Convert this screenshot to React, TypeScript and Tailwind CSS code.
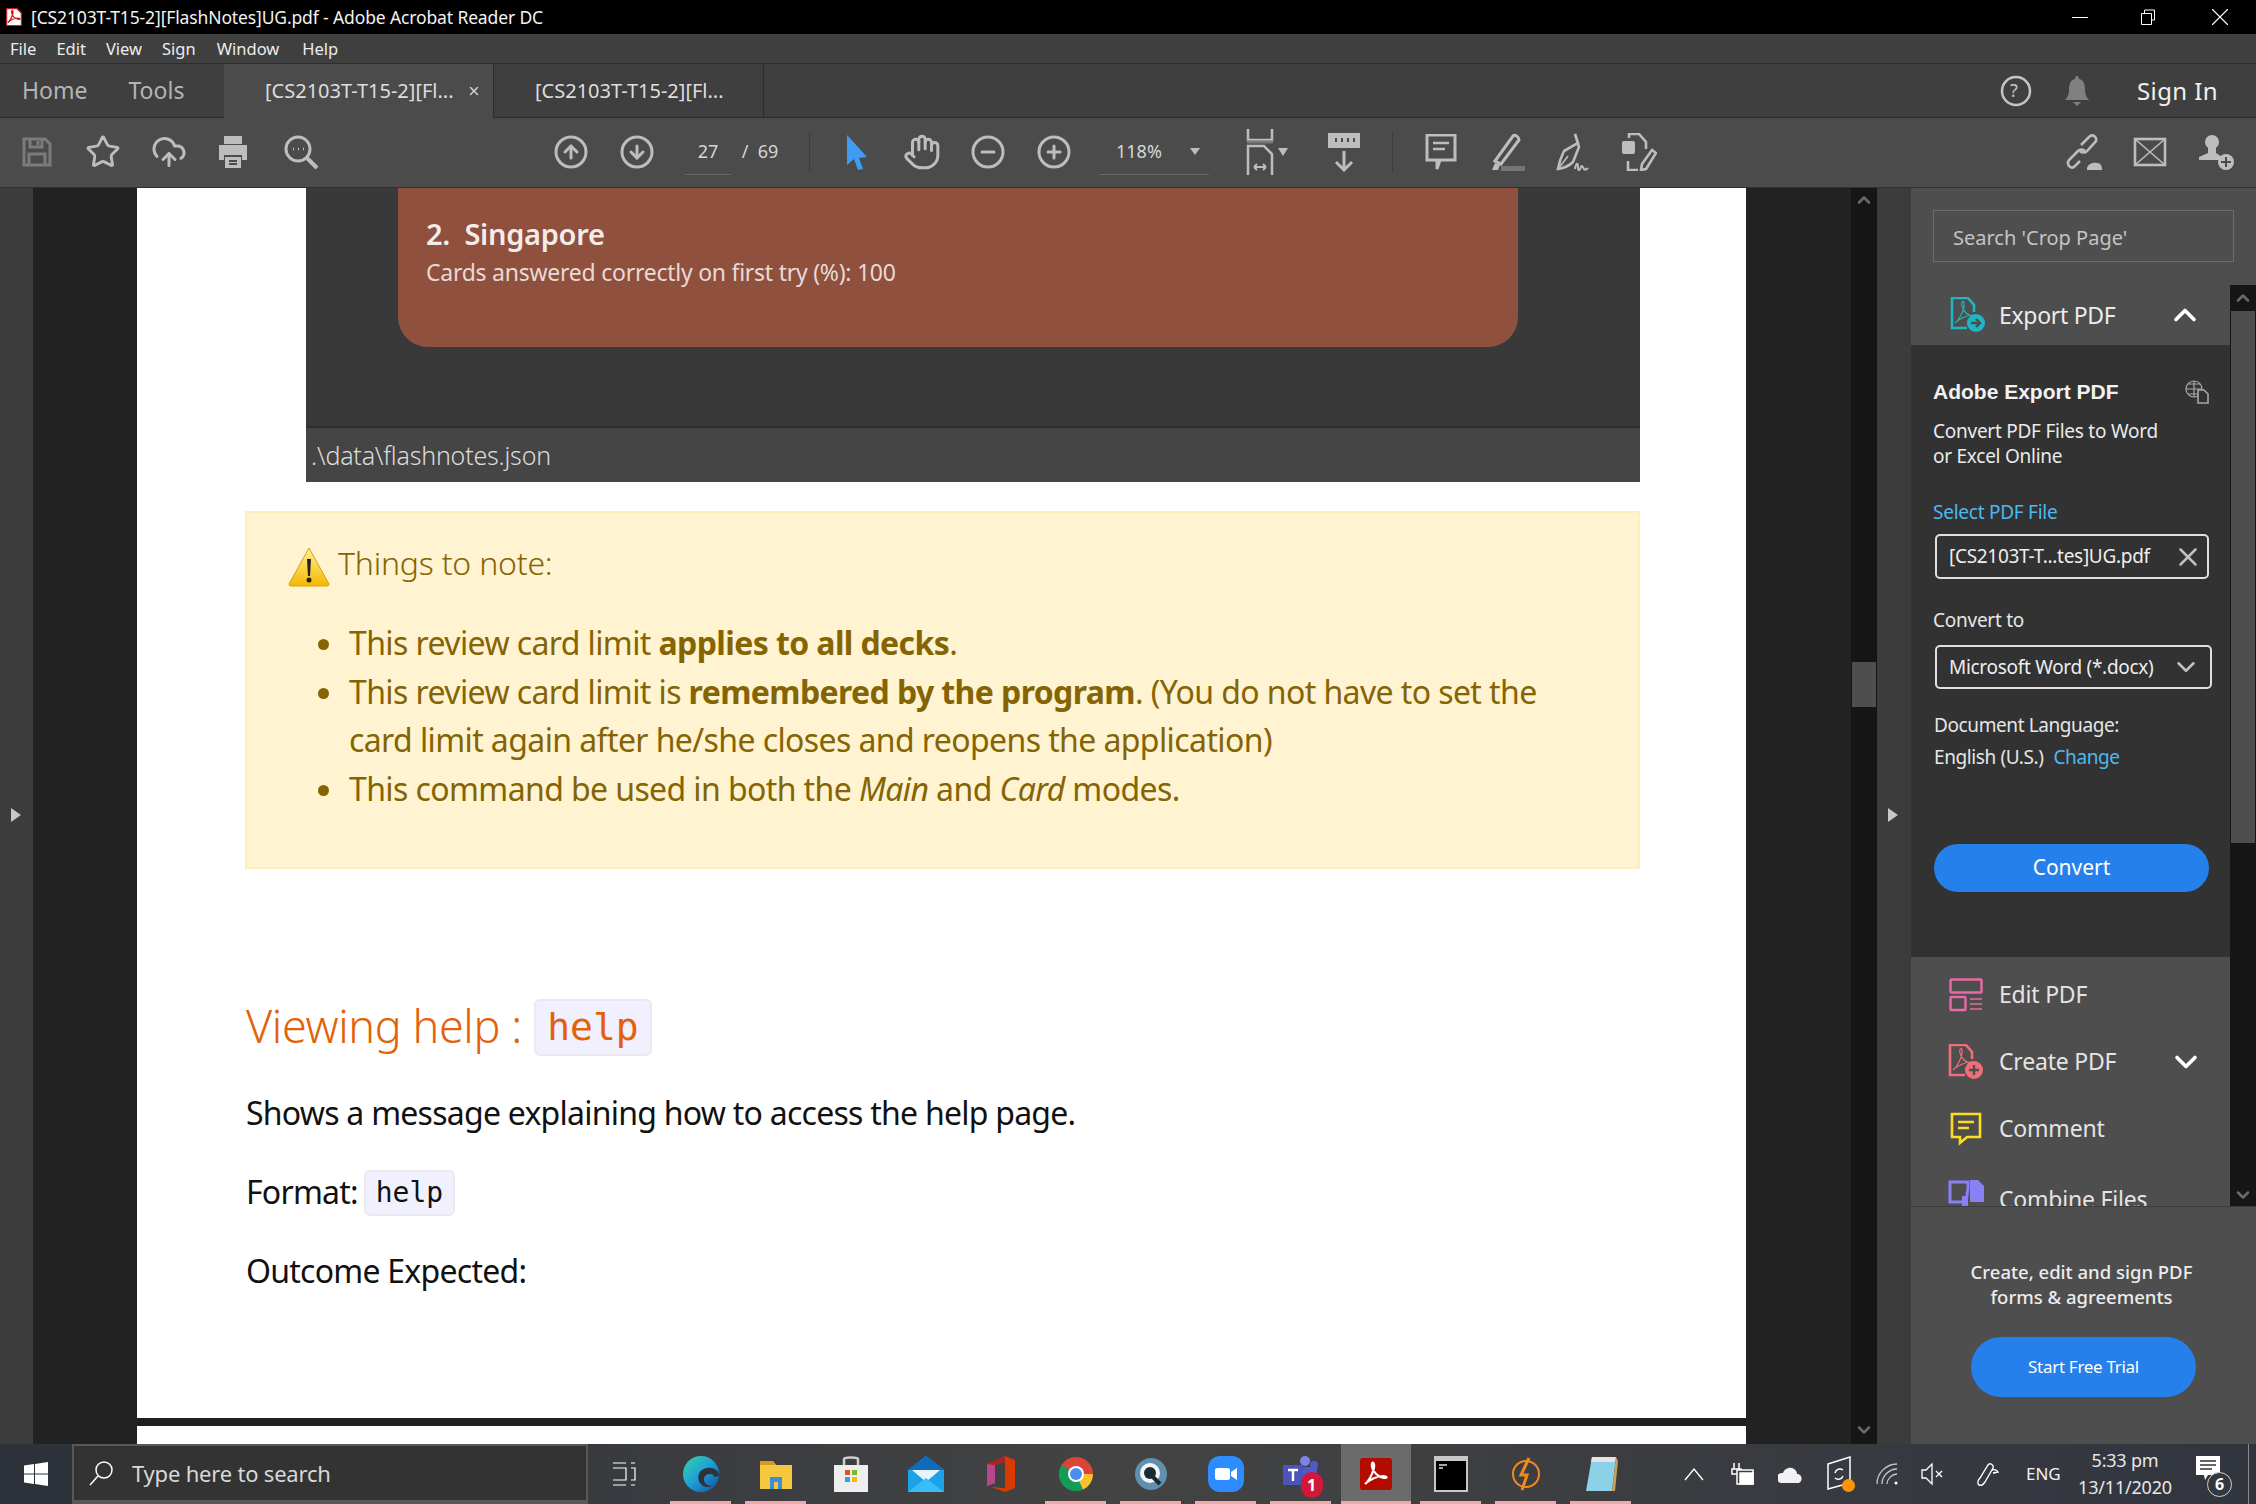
import React from "react";
import { CircleArrowUp, CircleArrowDown, CircleMinus, CirclePlus, Hand, Star, CloudUpload, ChevronUp, ChevronDown, X } from "lucide-react";

const Acro = ({ c = "#fff", w = 2 }: { c?: string; w?: number }) => (
  <path d="M5 26 C10 22 15 11 14 6 C13 3 11 5 12 9 C13 14 18 19 24 20 C28 20 27 18 23 18 C17 18 9 22 5 26Z" fill="none" stroke={c} strokeWidth={w} />
);

const Tb = ({ children, className = "" }: { children: React.ReactNode; className?: string }) => (
  <div className={"w-[46px] h-[46px] flex items-center justify-center shrink-0 " + className}>{children}</div>
);

const G = "#bdbdbd";

function Toolbar() {
  return (
    <div className="h-[70px] bg-[#4b4b4b] border-b border-[#333333] flex items-center pb-[2px]">
      <Tb className="ml-[14px]">
        <svg width="32" height="32" viewBox="0 0 32 32" fill="none" stroke="#7b7b7b" strokeWidth="3"><path d="M3 3h21l5 5v21H3z" /><path d="M9 3v8h12V3M8 29V18h16v11" /><path d="M17 5v4" /></svg>
      </Tb>
      <Tb className="ml-[20px]"><Star size={36} color={G} strokeWidth={1.9} /></Tb>
      <Tb className="ml-[20px]"><CloudUpload size={36} color={G} strokeWidth={2} /></Tb>
      <Tb className="ml-[18px]">
        <svg width="34" height="34" viewBox="0 0 34 34"><path d="M8 1h18v8H8zM3 10h28v15h-5v-5H8v5H3z" fill={G} /><path d="M9 22h16v11H9z" fill={G} /><path d="M13 26h8M13 29h8" stroke="#4b4b4b" strokeWidth="2" /></svg>
      </Tb>
      <Tb className="ml-[22px]">
        <svg width="36" height="36" viewBox="0 0 36 36" fill="none" stroke={G} strokeWidth="3"><circle cx="15" cy="15" r="12" /><path d="M24 24l10 10" strokeWidth="4" /><path d="M10 15h1M15 15h1M20 15h1" strokeWidth="2.5" /></svg>
      </Tb>
      <Tb className="ml-[224px]"><CircleArrowUp size={36} color={G} strokeWidth={2} /></Tb>
      <Tb className="ml-[20px]"><CircleArrowDown size={36} color={G} strokeWidth={2} /></Tb>
      <div className="ml-[25px] w-[46px] h-[46px] border-b border-[#666666] text-[18px] text-[#d6d6d6] flex items-center justify-center">27</div>
      <div className="ml-[6px] w-[56px] text-[18px] text-[#d6d6d6] whitespace-pre">{" /  69"}</div>
      <div className="ml-[16px] w-px h-[40px] bg-[#3c3c3c]" />
      <Tb className="ml-[24px]">
        <svg width="24" height="36" viewBox="0 0 24 36"><path d="M2 1l20 22-8 1 4 11-5 1-4-11-7 6z" fill="#3e9cf5" /></svg>
      </Tb>
      <Tb className="ml-[19px]"><Hand size={38} color={G} strokeWidth={1.9} /></Tb>
      <Tb className="ml-[20px]"><CircleMinus size={36} color={G} strokeWidth={2} /></Tb>
      <Tb className="ml-[20px]"><CirclePlus size={36} color={G} strokeWidth={2} /></Tb>
      <div className="ml-[22px] w-[110px] h-[46px] border-b border-[#666666] flex items-center text-[18px] text-[#d6d6d6]">
        <span className="ml-[17px] w-[73px]">118%</span>
        <svg width="12" height="8" viewBox="0 0 12 8"><path d="M1 1h10L6 8z" fill={G} /></svg>
      </div>
      <div className="ml-[36px] w-[30px] h-[46px] shrink-0">
        <svg width="30" height="46" viewBox="0 0 30 46" fill="none" stroke={G} strokeWidth="2.5"><path d="M3 0v11h24V0" /><path d="M2 13h26" stroke="#777" strokeWidth="3" /><path d="M3 46V17h16l8 8v21" /><path d="M9 38h12M9 38l3-3M9 38l3 3M21 38l-3-3M21 38l-3 3" strokeWidth="1.8" /></svg>
      </div>
      <svg className="ml-[2px]" width="12" height="9" viewBox="0 0 12 9"><path d="M1 1h10L6 9z" fill={G} /></svg>
      <Tb className="ml-[32px]">
        <svg width="36" height="40" viewBox="0 0 36 40" fill="none"><rect x="2" y="1" width="32" height="15" fill={G} /><path d="M9 8h2M15 8h2M21 8h2M27 8h2" stroke="#4b4b4b" strokeWidth="4" /><path d="M18 19v19M10 30l8 8 8-8" stroke={G} strokeWidth="3" /></svg>
      </Tb>
      <div className="ml-[25px] w-px h-[40px] bg-[#3c3c3c]" />
      <Tb className="ml-[25px]">
        <svg width="32" height="36" viewBox="0 0 32 36" fill="none"><path d="M2 1h28v25H15l-3 9v-9H2z" stroke={G} strokeWidth="3" /><path d="M8 9h16M8 15h12" stroke={G} strokeWidth="2.5" /></svg>
      </Tb>
      <Tb className="ml-[20px]">
        <svg width="36" height="38" viewBox="0 0 36 38" fill="none"><path d="M6 28L24 3c2-2 6 1 6 4L12 31z" stroke={G} strokeWidth="3" fill="none" /><path d="M3 37l3-7 5 2-2 5z" fill={G} /><path d="M12 33h24v5H12z" fill="#757575" /></svg>
      </Tb>
      <Tb className="ml-[20px]">
        <svg width="36" height="38" viewBox="0 0 36 38" fill="none" stroke={G} strokeWidth="2.6"><path d="M20 1l3 9-14 8c-3 6-5 12-6 18 6-1 11-3 15-7l6-15z" /><path d="M4 35l9-12" strokeWidth="1.6" /><path d="M20 36c1-6 3-7 3-2s2 3 3 0 2 1 3 2 3 0 4-1" strokeWidth="2" /></svg>
      </Tb>
      <Tb className="ml-[20px]">
        <svg width="36" height="38" viewBox="0 0 36 38" fill="none" stroke={G} strokeWidth="2.6"><path d="M8 5V1h10l7 8v7" /><path d="M7 28v9h10" /><rect x="1" y="8" width="13" height="13" rx="2" fill={G} stroke="none" /><path d="M31 17l4 3-10 16-5 1 1-6z" /></svg>
      </Tb>
      <Tb className="ml-[399px]">
        <svg width="38" height="38" viewBox="0 0 38 38" fill="none" stroke={G} strokeWidth="2.6"><path d="M16 12l9-9c3-2 7 1 6 5l-9 10c-2 2-5 2-7 0" /><path d="M20 18c-2-2-5-2-7 0l-9 9c-3 4 1 9 5 7l6-6" /><path d="M22 37c-1-7 9-8 10-7 4 0 5 3 5 7z" fill={G} stroke="none" /></svg>
      </Tb>
      <Tb className="ml-[20px]">
        <svg width="34" height="30" viewBox="0 0 34 30" fill="none" stroke={G} strokeWidth="2.6"><rect x="2" y="2" width="30" height="26" /><path d="M2 2l30 26M32 2L2 28" strokeWidth="1.6" /></svg>
      </Tb>
      <Tb className="ml-[20px]">
        <svg width="36" height="38" viewBox="0 0 36 38"><circle cx="14" cy="9" r="7" fill={G} /><path d="M10 14h8v6l6 4v3H1v-3l9-4z" fill={G} /><circle cx="28" cy="29" r="8" fill={G} /><path d="M28 24v10M23 29h10" stroke="#4b4b4b" strokeWidth="2" /></svg>
      </Tb>
    </div>
  );
}

function TopBars() {
  return (
    <>
      <div className="h-[34px] bg-black flex items-center">
        <svg className="ml-[5px]" width="18" height="20" viewBox="0 0 32 32"><path d="M3 1h18l8 8v22H3z" fill="#fff" stroke="#c81e1e" strokeWidth="2" /><Acro c="#d01c1c" w={2.4} /></svg>
        <span className="ml-[8px] text-[17.5px] text-[#f2f2f2] tracking-[-0.13px]">[CS2103T-T15-2][FlashNotes]UG.pdf - Adobe Acrobat Reader DC</span>
        <div className="ml-auto flex items-center">
          <div className="w-[16px] h-px bg-white" />
          <svg className="ml-[52px]" width="16" height="16" viewBox="0 0 16 16" fill="none" stroke="#fff"><path d="M1.5 4.5h10v11h-10zM4.5 4V1h10v10h-3" /></svg>
          <X className="ml-[49px] mr-[21px]" size={30} color="#fff" strokeWidth={0.9} />
        </div>
      </div>
      <div className="h-[30px] bg-[#3f3f3f] border-b border-[#2d2d2d] flex items-center pt-[1px] text-[16.5px] text-[#ececec]">
        <span className="ml-[10px]">File</span>
        <span className="ml-[20px]">Edit</span>
        <span className="ml-[20px]">View</span>
        <span className="ml-[20px]">Sign</span>
        <span className="ml-[21px]">Window</span>
        <span className="ml-[23px]">Help</span>
      </div>
      <div className="h-[54px] bg-[#3f3f3f] flex">
        <div className="w-[224px] border-b border-[#2c2c2c] flex items-center text-[23px] text-[#b4b4b4]">
          <span className="ml-[22px]">Home</span>
          <span className="ml-[41px]">Tools</span>
        </div>
        <div className="w-[270px] bg-[#4b4b4b] border-r border-[#2c2c2c] flex items-center text-[20px] text-[#dedede]">
          <span className="ml-[41px]">[CS2103T-T15-2][Fl...</span>
          <X className="ml-[13px]" size={14} color="#cfcfcf" strokeWidth={2.5} />
        </div>
        <div className="w-[270px] border-b border-r border-[#2c2c2c] flex items-center text-[20px] text-[#dedede]">
          <span className="ml-[41px]">[CS2103T-T15-2][Fl...</span>
        </div>
        <div className="flex-1 border-b border-[#2c2c2c] flex items-center">
          <svg className="ml-[1236px]" width="32" height="32" viewBox="0 0 32 32" fill="none" stroke="#c4c4c4" strokeWidth="2.5"><circle cx="16" cy="16" r="14" /></svg>
          <span className="ml-[-22px] w-[12px] text-[18px] text-[#c4c4c4]">?</span>
          <svg className="ml-[42px]" width="26" height="32" viewBox="0 0 26 32"><path d="M13 1c2 0 2 2 2 3 5 1 6 6 6 11 0 5 2 8 4 10H1c2-2 4-5 4-10 0-5 1-10 6-11 0-1 0-3 2-3z" fill="#808080" /><path d="M9 27h8l-4 4z" fill="#808080" /></svg>
          <span className="ml-[47px] text-[24px] text-[#f0f0f0] tracking-[0.4px]">Sign In</span>
        </div>
      </div>
      <Toolbar />
    </>
  );
}

function Page() {
  return (
    <div className="w-[1609px] h-full flex flex-col shrink-0 overflow-hidden">
      <div className="h-[1230px] bg-white shrink-0">
        <div className="ml-[169px] w-[1334px] h-[294px] bg-[#393939] flex flex-col">
          <div className="ml-[92px] w-[1120px] h-[159px] bg-[#8f503e] rounded-b-[30px] pl-[28px] pt-[27px] text-[#f3ece9]">
            <div className="text-[29px] leading-[38px] font-semibold tracking-[-0.3px] whitespace-pre">2.  Singapore</div>
            <div className="text-[23px] leading-[32px] mt-[3px] tracking-[-0.25px] text-[#e8dad5]">Cards answered correctly on first try (%): 100</div>
          </div>
          <div className="mt-auto h-[56px] bg-[#454545] border-t-2 border-[#2e2e2e] pl-[5px] text-[25px] font-light leading-[54px] text-[#dcdcdc] tracking-[-0.2px]">.\data\flashnotes.json</div>
        </div>
        <div className="mt-[29px] ml-[108px] w-[1395px] h-[358px] bg-[#fff3d1] border-2 border-[#ffeeba] text-[#856404] text-[32px] tracking-[-0.6px]">
          <div className="flex items-center mt-[26px] ml-[41px] h-[48px]">
            <svg className="mt-[8px]" width="42" height="40" viewBox="0 0 42 40"><defs><linearGradient id="warn" x1="0" y1="0" x2="0" y2="1"><stop offset="0" stopColor="#fff199" /><stop offset="1" stopColor="#f5b800" /></linearGradient></defs><path d="M21 1L41 37a2 2 0 0 1-2 2H3a2 2 0 0 1-2-2z" fill="url(#warn)" stroke="#d9a400" /><path d="M19 12h4l-1 17h-2z" fill="#222" /><circle cx="21" cy="33" r="2.5" fill="#222" /></svg>
            <span className="ml-[8px] font-light tracking-[-0.2px]">Things to note:</span>
          </div>
          <ul className="mt-[32px] ml-[100px] mr-[70px] list-disc leading-[48.5px] marker:text-[#856404]">
            <li className="pl-[2px]">This review card limit <b>applies to all decks</b>.</li>
            <li className="pl-[2px]">This review card limit is <b>remembered by the program</b>. (You do not have to set the card limit again after he/she closes and reopens the application)</li>
            <li className="pl-[2px]">This command be used in both the <i>Main</i> and <i>Card</i> modes.</li>
          </ul>
        </div>
        <div className="mt-[130px] ml-[109px] flex items-center h-[57px] text-[#e36209]">
          <span className="text-[45px] font-light tracking-[-0.4px] mb-[4px]">Viewing help :</span>
          <span className="ml-[12px] h-[57px] w-[118px] bg-[#f0f0ff] border-2 border-[#e9e9ef] rounded-[6px] flex items-center justify-center font-['DejaVu_Sans_Mono',monospace] text-[38px]">help</span>
        </div>
        <div className="mt-[37px] ml-[109px] h-[40px] leading-[40px] text-[32px] text-[#111111] tracking-[-0.75px]">Shows a message explaining how to access the help page.</div>
        <div className="mt-[37px] ml-[109px] flex items-center h-[46px] text-[32px] text-[#111111] tracking-[-0.75px]">
          <span className="mb-[3px]">Format:</span>
          <span className="ml-[6px] h-[46px] w-[91px] bg-[#f0f0ff] border-2 border-[#e9e9ef] rounded-[6px] flex items-center justify-center font-['DejaVu_Sans_Mono',monospace] text-[28px] tracking-normal">help</span>
        </div>
        <div className="mt-[35px] ml-[109px] h-[40px] leading-[40px] text-[32px] text-[#111111] tracking-[-0.75px]">Outcome Expected:</div>
      </div>
      <div className="h-[8px] bg-[#1f1f1f] shrink-0" />
      <div className="flex-1 bg-white" />
    </div>
  );
}

function PanelRow({ label, icon, chevron, className = "" }: { label: string; icon: React.ReactNode; chevron?: React.ReactNode; className?: string }) {
  return (
    <div className={"h-[67px] flex items-center shrink-0 " + className}>
      <div className="ml-[37px] w-[36px] h-[36px] flex items-center justify-center">{icon}</div>
      <span className="ml-[15px] w-[180px] text-[23px] text-[#e4e4e4] tracking-[-0.2px]">{label}</span>
      {chevron}
    </div>
  );
}

function RightPanel() {
  return (
    <div className="w-[345px] h-full bg-[#4e4e4e] flex flex-col shrink-0">
      <div className="h-[97px] shrink-0 pt-[22px] pl-[22px]">
        <div className="w-[301px] h-[52px] border border-[#6c6c6c] pl-[19px] text-[20px] leading-[54px] text-[#c4c4c4]">Search 'Crop Page'</div>
      </div>
      <div className="h-[922px] flex shrink-0 border-b border-[#3c3c3c] overflow-hidden">
        <div className="w-[319px] flex flex-col overflow-hidden">
          <div className="h-[60px] flex items-center shrink-0">
            <div className="ml-[39px] w-[36px] h-[36px] shrink-0">
              <svg width="36" height="36" viewBox="0 0 36 36" fill="none"><path d="M24 15V8l-6-7H2v30h15" stroke="#1fb5c4" strokeWidth="2.6" /><Acro c="#1fb5c4" w={1.2} /><circle cx="26" cy="26" r="9" fill="#1fb5c4" /><path d="M21 26h9M26 22l4 4-4 4" stroke="#4e4e4e" strokeWidth="2.4" /></svg>
            </div>
            <span className="ml-[13px] w-[168px] text-[23px] text-[#ededed] tracking-[-0.3px]">Export PDF</span>
            <ChevronUp size={36} color="#ffffff" strokeWidth={2.4} />
          </div>
          <div className="h-[612px] shrink-0 bg-[#323232] pl-[22px] flex flex-col">
            <div className="mt-[33px] h-[28px] flex items-center">
              <span className="font-['Liberation_Sans'] font-bold text-[21px] text-[#f2f2f2]">Adobe Export PDF</span>
              <svg className="ml-[66px]" width="24" height="24" viewBox="0 0 24 24" fill="none" stroke="#a8a8a8" strokeWidth="1.2"><circle cx="9" cy="9" r="8" /><path d="M1 9h16M9 1v16M3 4h12M3 14h12" /><path d="M13 10h6l4 4v9H13z" fill="#323232" strokeWidth="1.6" /></svg>
            </div>
            <div className="mt-[13px] text-[19px] leading-[25px] text-[#eaeaea] tracking-[-0.25px]">Convert PDF Files to Word<br />or Excel Online</div>
            <div className="mt-[30px] text-[19px] leading-[26px] text-[#4db8ef] tracking-[-0.25px]">Select PDF File</div>
            <div className="mt-[9px] ml-[2px] w-[274px] h-[45px] border-2 border-[#e0e0e0] rounded-[5px] flex items-center">
              <span className="ml-[12px] text-[19px] text-[#eeeeee] tracking-[-0.3px] w-[224px] whitespace-nowrap">[CS2103T-T...tes]UG.pdf</span>
              <X size={30} color="#c0c0c0" strokeWidth={2} />
            </div>
            <div className="mt-[28px] text-[19px] leading-[26px] text-[#e6e6e6] tracking-[-0.25px]">Convert to</div>
            <div className="mt-[12px] ml-[2px] w-[277px] h-[44px] border-2 border-[#e0e0e0] rounded-[5px] flex items-center">
              <span className="ml-[12px] text-[19px] text-[#eeeeee] tracking-[-0.3px] w-[222px] whitespace-nowrap">Microsoft Word (*.docx)</span>
              <ChevronDown size={30} color="#c0c0c0" strokeWidth={2} />
            </div>
            <div className="mt-[23px] ml-[1px] text-[19px] leading-[26px] text-[#e6e6e6] tracking-[-0.4px]">Document Language:</div>
            <div className="mt-[6px] ml-[1px] text-[19px] leading-[26px] text-[#e6e6e6] tracking-[-0.4px]">English (U.S.)<span className="ml-[10px] text-[#4db8ef]">Change</span></div>
            <div className="mt-[74px] ml-[1px] w-[275px] h-[48px] rounded-full bg-[#2680eb] flex items-center justify-center text-[21px] text-white">Convert</div>
          </div>
          <div className="h-[4px] shrink-0" />
          <PanelRow label="Edit PDF" icon={<svg width="34" height="34" viewBox="0 0 34 34" fill="none" stroke="#e86aa8" strokeWidth="2.4"><rect x="1.5" y="1.5" width="31" height="13" rx="1" /><rect x="1.5" y="19" width="15" height="13" rx="1" /><path d="M21 21h12M21 26h12M21 31h12" strokeWidth="1.6" /></svg>} />
          <PanelRow label="Create PDF" icon={<svg width="36" height="36" viewBox="0 0 36 36" fill="none"><path d="M24 15V8l-6-7H2v30h15" stroke="#ee6e7a" strokeWidth="2.6" /><Acro c="#ee6e7a" w={1.2} /><circle cx="26" cy="26" r="9" fill="#ee6e7a" /><path d="M21 26h10M26 21v10" stroke="#4e4e4e" strokeWidth="2.4" /></svg>} chevron={<ChevronDown className="ml-[-11px]" size={36} color="#ffffff" strokeWidth={2.4} />} />
          <PanelRow label="Comment" icon={<svg width="32" height="34" viewBox="0 0 32 34" fill="none" stroke="#ffdd1e" strokeWidth="2.6"><path d="M2 2h28v23H17l-7 6v-6H2z" /><path d="M8 10h16M8 16h11" strokeWidth="2.6" /></svg>} />
          <PanelRow className="mt-[4px]" label="Combine Files" icon={<svg className="mb-[12px] shrink-0" width="36" height="28" viewBox="0 0 36 28"><path d="M2 2h18v6l-2 14H2z" fill="none" stroke="#8a80f5" strokeWidth="3" /><path d="M22 0h8l6 6v16H22zM14 16h6v12h-6z" fill="#8a80f5" /></svg>} />
        </div>
        <div className="w-[26px] bg-[#161616] flex flex-col items-center">
          <ChevronUp className="h-[26px]" size={20} color="#6a6a6a" strokeWidth={3} />
          <div className="w-[24px] h-[532px] bg-[#4e4e4e]" />
          <ChevronDown className="mt-auto mb-[1px]" size={20} color="#6a6a6a" strokeWidth={3} />
        </div>
      </div>
      <div className="flex-1 flex flex-col items-center">
        <div className="mt-[52px] mr-[4px] w-[300px] text-center text-[18.5px] leading-[25px] font-medium text-[#ececec]">Create, edit and sign PDF<br />forms &amp; agreements</div>
        <div className="mt-[28px] w-[225px] h-[60px] rounded-full bg-[#2680eb] flex items-center justify-center text-[17px] text-white tracking-[-0.3px]">Start Free Trial</div>
      </div>
    </div>
  );
}

function TaskSlot({ children, line }: { children: React.ReactNode; line?: boolean }) {
  return (
    <div className="w-[75px] h-full flex items-center justify-center relative shrink-0">
      {children}
      {line && <span className="absolute bottom-0 left-[7px] w-[61px] h-[3px] bg-[#f0a9a9]" />}
    </div>
  );
}

function Taskbar() {
  return (
    <div className="h-[60px] bg-linear-to-r from-[#2c313a] via-[#434343] to-[#31353e] flex items-center text-white shrink-0">
      <svg className="ml-[24px]" width="24" height="24" viewBox="0 0 24 24" fill="#fff"><path d="M0 3.5l10-1.4v9.4H0zM11 2l13-2v11.5H11zM0 12.5h10V22L0 20.5zM11 12.5h13V24l-13-2z" /></svg>
      <div className="ml-[24px] w-[516px] h-[60px] bg-[#333333] border-2 border-b-4 border-[#585858] flex items-center">
        <svg className="ml-[14px]" width="26" height="26" viewBox="0 0 26 26" fill="none" stroke="#fff" strokeWidth="1.5"><circle cx="16" cy="10" r="8" /><path d="M10 16L2 25" /></svg>
        <span className="ml-[18px] text-[22px] text-[#d8d8d8] tracking-[-0.2px]">Type here to search</span>
      </div>
      <svg className="ml-[24px] mr-[27px]" width="24" height="24" viewBox="0 0 24 24" fill="none" stroke="#fff" strokeWidth="1.2"><path d="M1 1h13M1 23h13M1 6h13v12H1M19 1h4M19 6h4v12h-4M19 23h4" /></svg>
      <TaskSlot line>
        <svg width="36" height="36" viewBox="0 0 36 36"><defs><linearGradient id="ed" x1="0" y1="0" x2="1" y2="1"><stop offset="0" stopColor="#38d6a8" /><stop offset="0.5" stopColor="#1d9fd8" /><stop offset="1" stopColor="#0b4f9e" /></linearGradient></defs><circle cx="18" cy="18" r="18" fill="url(#ed)" /><path d="M36 20c0-6-6-9-12-8-8 1-11 9-7 15 3 4 8 5 12 3-5 0-8-3-8-7 0-3 3-5 6-5 3 0 4 1 4 3z" fill="#2f3338" /></svg>
      </TaskSlot>
      <TaskSlot line>
        <svg width="34" height="32" viewBox="0 0 34 32"><path d="M1 3h13l3 4h16v24H1z" fill="#f4c83f" /><path d="M1 3h13l2 4H1z" fill="#d99a1a" /><path d="M11 31V19h12v12h-4v-7h-4v7z" fill="#3c8fd6" /></svg>
      </TaskSlot>
      <TaskSlot>
        <svg width="34" height="36" viewBox="0 0 34 36"><path d="M10 9V3c0-2 14-2 14 0v6" fill="none" stroke="#cfcfcf" strokeWidth="2.5" /><path d="M0 9h34v27H0z" fill="#eeeeee" /><path d="M11 14h5v5h-5z" fill="#e2501f" /><path d="M18 14h5v5h-5z" fill="#7cb826" /><path d="M11 21h5v5h-5z" fill="#2aa5e8" /><path d="M18 21h5v5h-5z" fill="#fbb800" /></svg>
      </TaskSlot>
      <TaskSlot>
        <svg width="36" height="36" viewBox="0 0 36 36"><path d="M18 0l18 14v22H0V14z" fill="#1aa3e8" /><path d="M18 0l18 14H0z" fill="#0f6cbd" /><path d="M4 14h28L18 26z" fill="#e8f4fc" /><path d="M0 36l18-14 18 14z" fill="#38bdf8" /></svg>
      </TaskSlot>
      <TaskSlot>
        <svg width="28" height="36" viewBox="0 0 28 36"><path d="M18 0l10 4v28l-10 4-14-5 14 1V6L8 9v18l-8 3V8z" fill="#d83b01" /><path d="M8 9v18l-8 3V8z" fill="#b7478b" /><path d="M18 0v6L8 9 0 8z" fill="#a4262c" /></svg>
      </TaskSlot>
      <TaskSlot line>
        <svg width="34" height="34" viewBox="0 0 34 34"><circle cx="17" cy="17" r="17" fill="#db4437" /><path d="M17 17L32 25A17 17 0 0 1 8 31.5z" fill="#0f9d58" /><path d="M17 17L8 31.5A17 17 0 0 1 2.5 8z" fill="#0f9d58" /><path d="M17 17H34A17 17 0 0 1 24 32.5z" fill="#fbc02d" /><circle cx="17" cy="17" r="8" fill="#fff" /><circle cx="17" cy="17" r="6" fill="#4a8ef0" /></svg>
      </TaskSlot>
      <TaskSlot line>
        <svg width="32" height="34" viewBox="0 0 32 34"><circle cx="16" cy="17" r="16" fill="#5f90ad" /><circle cx="15" cy="16" r="10" fill="#f4f4f4" /><circle cx="15" cy="16" r="6" fill="#1a2a33" /><path d="M18 20l7 7" stroke="#1a2a33" strokeWidth="4" /></svg>
      </TaskSlot>
      <TaskSlot line>
        <svg width="36" height="36" viewBox="0 0 36 36"><rect width="36" height="36" rx="12" fill="#2d8cff" /><rect x="7" y="12" width="15" height="12" rx="2.5" fill="#fff" /><path d="M23 16l6-4v12l-6-4z" fill="#fff" /></svg>
      </TaskSlot>
      <TaskSlot line>
        <div className="relative w-[40px] h-[38px]">
          <svg width="40" height="38" viewBox="0 0 40 38"><circle cx="24" cy="6" r="5" fill="#7b83eb" /><circle cx="33" cy="10" r="4" fill="#5059c9" /><path d="M14 12h22v14H14z" fill="#5059c9" /><path d="M2 10h20v20H2z" fill="#4b53bc" /><path d="M7 15h10M12 15v11" stroke="#fff" strokeWidth="2.4" /></svg>
          <span className="absolute right-[-2px] bottom-[-5px] w-[22px] h-[26px] rounded-full bg-[#d1173a] text-[16px] font-bold leading-[26px] text-center">1</span>
        </div>
      </TaskSlot>
      <div className="w-[70px] h-full bg-[#6b6b6b] flex items-center justify-center relative shrink-0 mx-[2.5px]">
        <svg width="32" height="36" viewBox="0 0 32 32"><rect width="32" height="32" rx="3" fill="#b30b00" /><Acro c="#fff" w={2.2} /></svg>
        <span className="absolute bottom-0 left-0 w-full h-[3px] bg-[#f0a9a9]" />
      </div>
      <TaskSlot line>
        <svg width="34" height="36" viewBox="0 0 34 36"><rect width="34" height="36" fill="#c8c8c8" /><rect x="2" y="5" width="30" height="29" fill="#000" /><path d="M5 9h8M5 12h4" stroke="#ddd" strokeWidth="1.5" /></svg>
      </TaskSlot>
      <TaskSlot line>
        <svg width="32" height="40" viewBox="0 0 32 40" fill="none"><circle cx="16" cy="20" r="13" stroke="#f08a1d" strokeWidth="2" /><path d="M19 4l-8 17h6L12 36" stroke="#f08a1d" strokeWidth="3" /></svg>
      </TaskSlot>
      <TaskSlot line>
        <svg width="34" height="38" viewBox="0 0 34 38"><path d="M8 2h24l-4 34H2z" fill="#8dd1e6" /><path d="M8 2h24l-1 5H7z" fill="#e4e4e4" /><path d="M28 36l4-34 2 4-3 30z" fill="#c9a15a" /></svg>
      </TaskSlot>
      <svg className="ml-[46px]" width="20" height="14" viewBox="0 0 20 14" fill="none" stroke="#fff" strokeWidth="1.4"><path d="M1 13L10 2l9 11" /></svg>
      <svg className="ml-[27px]" width="24" height="24" viewBox="0 0 24 24" fill="none" stroke="#fff" strokeWidth="1.5"><path d="M3 1v6M8 1v6M1 7h9v5H1z" /><rect x="6" y="8" width="16" height="14" fill="#3c3c3c" /><rect x="9" y="11" width="13" height="11" fill="#fff" /></svg>
      <svg className="ml-[23px]" width="26" height="18" viewBox="0 0 26 18"><path d="M3 18a5 5 0 0 1 2-10c1-4 7-7 11-4 2 1 3 3 3 5 4-1 7 6 2 9z" fill="#f2f2f2" /></svg>
      <div className="ml-[23px] w-[28px] h-[36px] relative shrink-0">
        <svg width="24" height="34" viewBox="0 0 24 34" fill="none" stroke="#fff" strokeWidth="1.5"><path d="M1 8L23 1v26L1 33z" /><path d="M8 17a5 5 0 0 1 8-3M16 20a5 5 0 0 1-8 2" /></svg>
        <span className="absolute right-0 bottom-0 w-[13px] h-[13px] rounded-full bg-[#ff9500]" />
      </div>
      <svg className="ml-[21px]" width="22" height="22" viewBox="0 0 22 22" fill="none" stroke="#c8c8c8" strokeWidth="1.3"><path d="M1 21C1 10 10 1 21 1M6 21C6 13 13 6 21 6M11 21c0-5 5-10 10-10" /><circle cx="20" cy="20" r="1.5" fill="#fff" stroke="none" /></svg>
      <svg className="ml-[23px]" width="22" height="24" viewBox="0 0 22 24" fill="none" stroke="#fff" strokeWidth="1.3"><path d="M1 8h4l6-6v20l-6-6H1zM15 9l6 6M21 9l-6 6" /></svg>
      <svg className="ml-[34px]" width="22" height="26" viewBox="0 0 22 26" fill="none" stroke="#fff" strokeWidth="1.4"><path d="M2 24c-2-2-1-5 1-7l8-13c2-3 6 0 5 3L8 21c-2 3-4 4-6 3zM15 9c2-1 5 0 6 2-2 0-3 1-5 1" /></svg>
      <span className="ml-[27px] text-[17px] text-[#f0f0f0] w-[38px]">ENG</span>
      <div className="ml-[6px] w-[110px] text-center text-[18px] leading-[27px] text-[#e8e8e8] tracking-[-0.2px]">5:33 pm<br />13/11/2020</div>
      <div className="ml-[16px] relative w-[36px] h-[36px] shrink-0">
        <svg width="26" height="26" viewBox="0 0 26 26"><path d="M0 0h24v19H12l-3 5-1-5H0z" fill="#fff" /><path d="M4 5h16M4 9h16M4 13h12" stroke="#333" strokeWidth="1.3" /></svg>
        <span className="absolute right-0 bottom-[-5px] w-[25px] h-[25px] rounded-full border border-[#cfcfcf] bg-[#33373e] text-[16px] font-bold leading-[23px] text-center">6</span>
      </div>
      <div className="ml-auto mr-[7px] w-px h-full bg-[#8a8a8a]" />
    </div>
  );
}

export default function App() {
  return (
    <div className="w-[2256px] h-[1504px] overflow-hidden flex flex-col font-['Noto_Sans',sans-serif] bg-[#222222]">
      <TopBars />
      <div className="h-[1256px] flex shrink-0">
        <div className="w-[33px] bg-[#3c3c3c] flex items-center shrink-0">
          <svg className="ml-[11px] mb-[2px]" width="10" height="14" viewBox="0 0 10 14"><path d="M0 0l10 7-10 7z" fill="#c8c8c8" /></svg>
        </div>
        <div className="w-[104px] bg-[#222222] shrink-0" />
        <Page />
        <div className="w-[105px] bg-[#222222] shrink-0" />
        <div className="w-[26px] bg-[#161616] flex flex-col items-center shrink-0">
          <ChevronUp className="h-[24px]" size={20} color="#6a6a6a" strokeWidth={3} />
          <div className="mt-[450px] w-[24px] h-[45px] bg-[#4e4e4e]" />
          <ChevronDown className="mt-auto mb-[4px]" size={20} color="#6a6a6a" strokeWidth={3} />
        </div>
        <div className="w-[34px] bg-[#3c3c3c] flex items-center shrink-0">
          <svg className="ml-[11px] mb-[2px]" width="10" height="14" viewBox="0 0 10 14"><path d="M0 0l10 7-10 7z" fill="#c8c8c8" /></svg>
        </div>
        <RightPanel />
      </div>
      <Taskbar />
    </div>
  );
}
